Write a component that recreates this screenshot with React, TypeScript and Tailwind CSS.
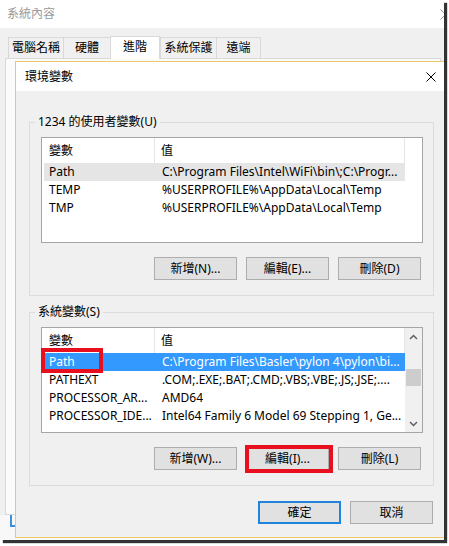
import React from "react";

const FONT = "font-['Noto_Sans','Noto_Sans_CJK_TC',sans-serif]";

type Row = { name: string; value: string; sel?: "gray" | "blue" };

const userRows: Row[] = [
  { name: "Path", value: "C:\\Program Files\\Intel\\WiFi\\bin\\;C:\\Progr...", sel: "gray" },
  { name: "TEMP", value: "%USERPROFILE%\\AppData\\Local\\Temp" },
  { name: "TMP", value: "%USERPROFILE%\\AppData\\Local\\Temp" },
];

const sysRows: Row[] = [
  { name: "Path", value: "C:\\Program Files\\Basler\\pylon 4\\pylon\\bi...", sel: "blue" },
  { name: "PATHEXT", value: ".COM;.EXE;.BAT;.CMD;.VBS;.VBE;.JS;.JSE;...." },
  { name: "PROCESSOR_AR...", value: "AMD64" },
  { name: "PROCESSOR_IDE...", value: "Intel64 Family 6 Model 69 Stepping 1, Ge..." },
];

function Btn({ label, primary }: { label: string; primary?: boolean }) {
  return (
    <div
      className={`w-[83px] h-[23px] flex items-center justify-center bg-[#e1e1e1] border ${
        primary ? "border-[#1f84da] shadow-[inset_0_0_0_1px_#1f84da]" : "border-[#adadad]"
      }`}
    >
      {label}
    </div>
  );
}

function ListView({ rows, scroll, annotate }: { rows: Row[]; scroll?: boolean; annotate?: boolean }) {
  return (
    <div className="relative w-[382px] h-[106px] border border-[#a5a5a5] bg-white flex">
      <div className="w-[363px] flex flex-col">
        <div className="h-[25px] flex">
          <div className="w-[113px] pl-[7px] flex items-center border-r border-[#e5e5e5]">變數</div>
          <div className="w-[250px] pl-[6px] flex items-center border-r border-[#e5e5e5]">值</div>
        </div>
        {rows.map((r, i) => (
          <div
            key={i}
            className={`ml-[2px] h-[18px] flex items-center whitespace-nowrap overflow-hidden ${
              r.sel === "blue" ? "bg-[#3399ff] text-white" : r.sel === "gray" ? "bg-[#e5e5e5]" : ""
            }`}
          >
            <div className="w-[111px] shrink-0 pl-[5px] overflow-hidden">{r.name}</div>
            <div className="pl-[7px] overflow-hidden">{r.value}</div>
          </div>
        ))}
      </div>
      {scroll && (
        <div className="ml-auto w-[17px] bg-[#f0f0f0] flex flex-col">
          <div className="h-[17px] flex items-center justify-center">
            <svg width="9" height="6" viewBox="0 0 9 6">
              <polyline points="1,5 4.5,1.5 8,5" fill="none" stroke="#606060" strokeWidth="1.5" />
            </svg>
          </div>
          <div className="flex-1 flex flex-col">
            <div className="h-[24px]" />
            <div className="mx-[1px] h-[17px] bg-[#cdcdcd]" />
          </div>
          <div className="h-[17px] flex items-center justify-center">
            <svg width="9" height="6" viewBox="0 0 9 6">
              <polyline points="1,1 4.5,4.5 8,1" fill="none" stroke="#606060" strokeWidth="1.5" />
            </svg>
          </div>
        </div>
      )}
      {annotate && (
        <div className="absolute left-[-1px] top-[20px] w-[62px] h-[25px] border-[4px] border-[#e8101f]" />
      )}
    </div>
  );
}

function Group({
  label,
  rows,
  scroll,
  buttons,
  annotate,
  className,
}: {
  label: string;
  rows: Row[];
  scroll?: boolean;
  buttons: string[];
  annotate?: boolean;
  className?: string;
}) {
  return (
    <div className={`relative w-[405px] border border-[#dcdcdc] pt-[14px] pb-[15px] pl-[11px] pr-[10px] ${className ?? ""}`}>
      <span className="absolute left-[5px] top-[-9px] bg-[#f0f0f0] px-[3px] leading-[16px]">{label}</span>
      <ListView rows={rows} scroll={scroll} annotate={annotate} />
      <div className="mt-[14px] w-[382px] pr-[2px] flex justify-end gap-[9px]">
        {buttons.map((b, i) => (
          <div key={i} className="relative">
            <Btn label={b} />
            {annotate && i === 1 && (
              <div className="absolute left-[-1px] top-[-2px] w-[88px] h-[28px] border-[4px] border-[#e8101f]" />
            )}
          </div>
        ))}
      </div>
    </div>
  );
}

export default function App() {
  const tabs = [
    { t: "電腦名稱", w: "w-[55px]" },
    { t: "硬體", w: "w-[47px]" },
    { t: "進階", w: "w-[50px]", sel: true },
    { t: "系統保護", w: "w-[56px]" },
    { t: "遠端", w: "w-[45px]" },
  ];
  return (
    <div className={`w-[449px] h-[546px] bg-white text-[12px] text-black ${FONT}`}>
      <div className="relative w-[444px] h-[540px] overflow-hidden shadow-[3px_3px_1px_rgba(0,0,0,0.8)]">
        {/* back window */}
        <div className="h-full flex flex-col bg-[#f0f0f0]">
          <div className="h-[28px] shrink-0 bg-white flex items-center justify-between pl-[7px] text-[#9a9a9a]">
            <span>系統內容</span>
            <svg width="11" height="11" viewBox="0 0 11 11" className="mr-[-7px]">
              <path d="M0.5 0.5 L10.5 10.5 M10.5 0.5 L0.5 10.5" stroke="#9a9a9a" strokeWidth="1" />
            </svg>
          </div>
          <div className="h-[30px] shrink-0 flex items-end pl-[8px]">
            {tabs.map((tb, i) => (
              <div
                key={i}
                className={`${tb.w} flex items-center justify-center border-t border-l border-[#d9d9d9] ${
                  i === tabs.length - 1 ? "border-r" : ""
                } ${tb.sel ? "h-[23px] bg-white relative z-10 mb-[-1px] border-r pb-[2px]" : "h-[21px] bg-[#f0f0f0]"}`}
              >
                {tb.t}
              </div>
            ))}
          </div>
          <div className="ml-[5px] mr-[3px] h-[457px] shrink-0 bg-[#fbfbfb] border border-[#d9d9d9]" />
          <div className="flex-1 bg-[#f8f8f8] pl-[10px]">
            <div className="w-[40px] h-[12px] border-l-2 border-b-2 border-[#3d8fdc]" />
          </div>
        </div>

        {/* dialog */}
        <div className="absolute left-[15px] top-[61px] w-[434px] h-[477px] border border-[#ebc96b] bg-[#f0f0f0] flex flex-col">
          <div className="h-[29px] shrink-0 bg-white flex items-center justify-between pl-[9px] pr-[12px]">
            <span>環境變數</span>
            <svg width="10" height="10" viewBox="0 0 10 10">
              <path d="M0.5 0.5 L9.5 9.5 M9.5 0.5 L0.5 9.5" stroke="#000" strokeWidth="1" />
            </svg>
          </div>
          <div className="flex flex-col pl-[13px]">
            <Group
              className="mt-[31px]"
              label="1234 的使用者變數(U)"
              rows={userRows}
              buttons={["新增(N)...", "編輯(E)...", "刪除(D)"]}
            />
            <Group
              className="mt-[16px]"
              label="系統變數(S)"
              rows={sysRows}
              scroll
              annotate
              buttons={["新增(W)...", "編輯(I)...", "刪除(L)"]}
            />
            <div className="mt-[15px] w-[405px] pr-[1px] flex justify-end gap-[9px]">
              <Btn label="確定" primary />
              <Btn label="取消" />
            </div>
          </div>
        </div>
      </div>
    </div>
  );
}
